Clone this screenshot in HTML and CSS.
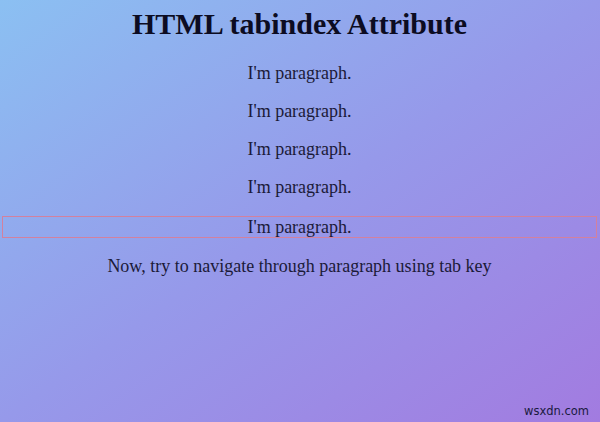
FILE: index.html
```html
<!DOCTYPE html>
<html>
<head>
<meta charset="utf-8">
<link rel="stylesheet" href="styles.css">
</head>
<body>
<main class="page">
  <h1 class="title">HTML tabindex Attribute</h1>
  <p class="para" tabindex="1">I'm paragraph.</p>
  <p class="para" tabindex="2">I'm paragraph.</p>
  <p class="para" tabindex="3">I'm paragraph.</p>
  <p class="para" tabindex="4">I'm paragraph.</p>
  <p class="para focused" tabindex="5">I'm paragraph.</p>
  <p class="note">Now, try to navigate through paragraph using tab key</p>
</main>
<div class="watermark">wsxdn.com</div>
</body>
</html>
```
FILE: styles.css
```css
html, body {
  margin: 0;
  height: 100%;
}
body {
  background: linear-gradient(to bottom right, #8bc0f2 0%, #9699ea 50%, #a27be0 100%);
  font-family: "Liberation Serif", "Times New Roman", serif;
  color: #1b1a38;
  position: relative;
  overflow: hidden;
}
.page {
  padding: 0 3px 0 2px;
  text-align: center;
}
.title {
  margin: 0 0 22px;
  padding-top: 7px;
  font-size: 30px;
  line-height: 34px;
  font-weight: bold;
  color: #0c0c22;
}
.para, .note {
  font-size: 18px;
  line-height: 20px;
  margin: 0 0 18px;
}
.focused {
  margin-top: 19px;
  border: 1px solid #d2819e;
}
.watermark {
  position: absolute;
  right: 11px;
  bottom: 4px;
  font-family: "DejaVu Sans", sans-serif;
  font-size: 11.5px;
  color: #1a1a40;
}
```
